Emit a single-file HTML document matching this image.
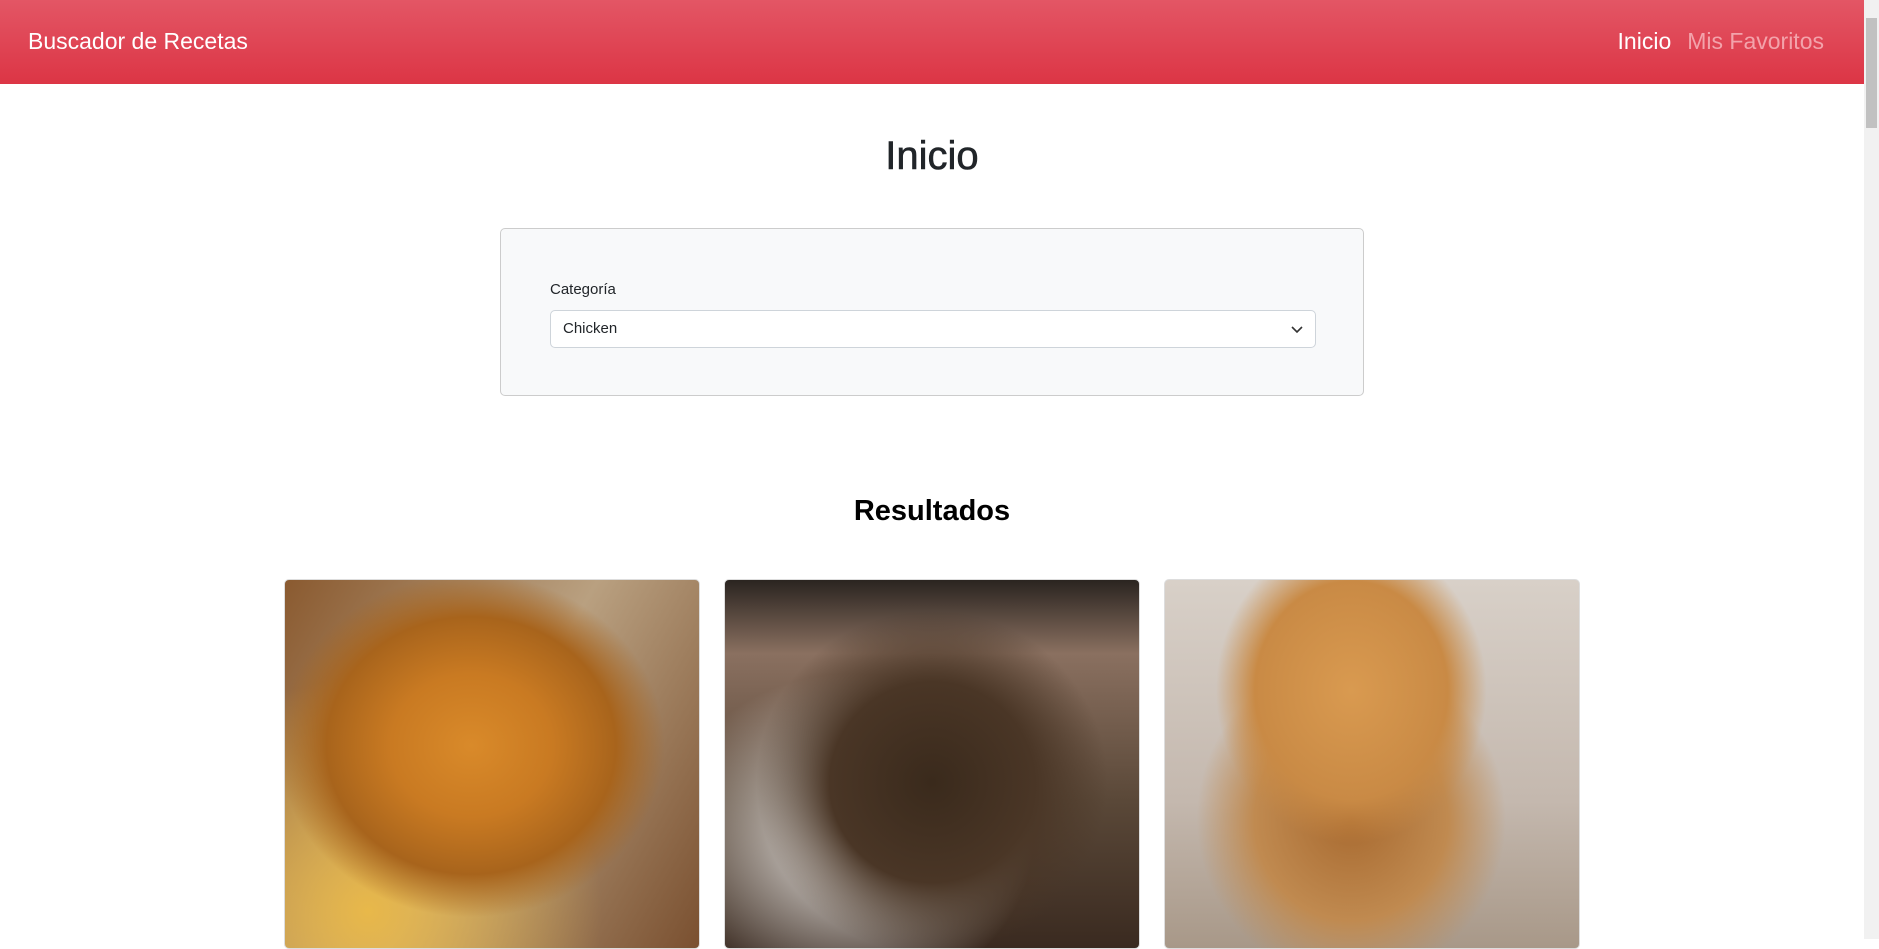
<!DOCTYPE html>
<html><head><meta charset="utf-8"><style>
*{box-sizing:border-box;margin:0;padding:0}
body{width:1879px;height:939px;overflow:hidden;font-family:"Liberation Sans",sans-serif;background:#fff;position:relative;color:#212529}
.nav{position:absolute;left:0;top:0;width:1864px;height:84px;background:linear-gradient(#e35665,#dc3545);color:#fff}
.brand{position:absolute;left:28px;top:28px;font-size:23px}
.links{position:absolute;right:40px;top:28px;font-size:23px}
.links span{margin-left:16px}
.sb{position:absolute;right:0;top:0;width:15px;height:939px;background:#f1f1f1}
.sb div{position:absolute;left:2px;top:18px;width:11px;height:110px;background:#c1c1c1}
h1{position:absolute;left:0;width:1864px;top:134px;text-align:center;font-size:40px;font-weight:500;-webkit-text-stroke:0.6px #212529}
.card{position:absolute;left:500px;top:228px;width:864px;height:168px;background:#f8f9fa;border:1px solid #ccc;border-radius:5px}
.lab{position:absolute;left:49px;top:52px;font-size:15px}
.sel{position:absolute;left:49px;top:81px;width:766px;height:38px;background:#fff;border:1px solid #ced4da;border-radius:5px;font-size:15px;padding:9px 12px}
.sel svg{position:absolute;right:12px;top:13px}
h2{position:absolute;left:0;width:1864px;top:495px;text-align:center;font-size:29px;font-weight:bold;color:#000}
.img{position:absolute;top:579px;width:416px;height:370px;border-radius:5px;border:1px solid #ddd;overflow:hidden}
</style></head><body>
<div class="nav"><div class="brand">Buscador de Recetas</div><div class="links"><span>Inicio</span><span style="color:#f3a3ab">Mis Favoritos</span></div></div>
<div class="sb"><div></div></div>
<h1>Inicio</h1>
<div class="card"><div class="lab">Categoría</div><div class="sel">Chicken<svg width="12" height="10" viewBox="0 0 12 10"><path d="M1 3l5 5 5-5" stroke="#333" stroke-width="1.6" fill="none"/></svg></div></div>
<h2>Resultados</h2>
<div class="img" style="left:284px;background:radial-gradient(ellipse at 45% 45%,#d98a2a 0,#c97a22 25%,#a8641c 45%,transparent 60%),radial-gradient(ellipse at 20% 90%,#e8b84a,transparent 50%),linear-gradient(120deg,#8a5a30,#b9a080 50%,#7a5030)"></div>
<div class="img" style="left:724px;background:radial-gradient(ellipse at 50% 55%,#3a2a1c 0,#4a3626 35%,transparent 60%),radial-gradient(ellipse at 30% 70%,#e8e6e4,transparent 45%),linear-gradient(#2a2420,#8a7060 20%,#5a4838 60%,#3a2a20)"></div>
<div class="img" style="left:1164px;background:radial-gradient(ellipse at 45% 30%,#d99a50 0,#c98a45 30%,transparent 42%),radial-gradient(ellipse at 45% 65%,#a86a30 0,#c08a50 30%,transparent 48%),linear-gradient(#d8d0c8,#c4b8ae 60%,#a89888)"></div>
</body></html>
